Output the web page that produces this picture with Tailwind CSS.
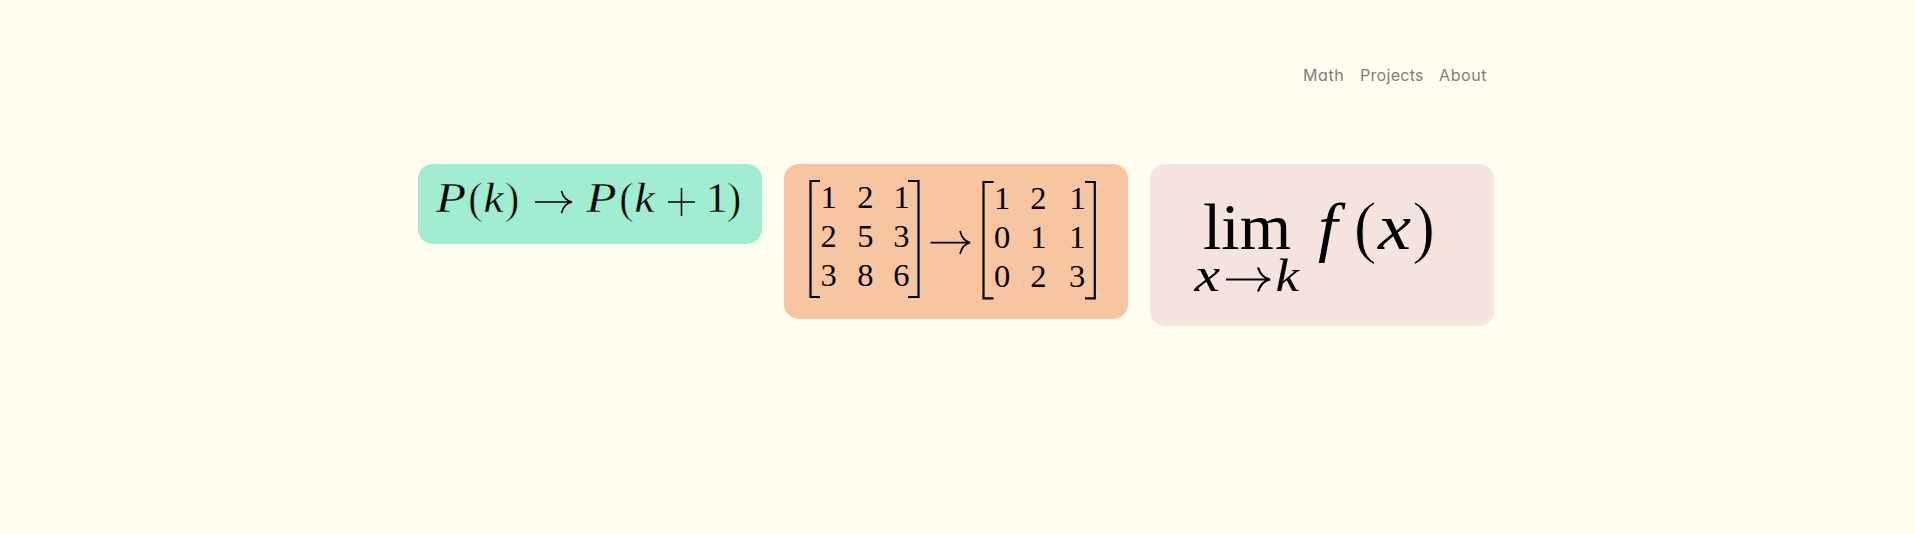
<!DOCTYPE html>
<html lang="en">
<head>
<meta charset="utf-8">
<title>Math</title>
<script src="https://cdn.jsdelivr.net/npm/@tailwindcss/browser@4"></script>
</head>
<body class="bg-[#fffdf0] min-h-screen overflow-hidden">
<div class="w-[1076px] ml-[418px] pt-[61px]">
  <nav class="flex justify-end gap-4 pr-[6px] h-[103px] text-base leading-7 text-[#808078] font-[Inter,sans-serif] [font-feature-settings:'cv11'] tracking-[0.3px]">
    <a class="w-[41px] whitespace-nowrap tracking-[0.6px]">Math</a>
    <a class="w-[63px] whitespace-nowrap">Projects</a>
    <a class="w-[49px] whitespace-nowrap tracking-[0.6px]">About</a>
  </nav>
  <main class="flex items-start gap-[22px] font-['Liberation_Serif',serif]">
    <section class="w-[344px] h-[80px] rounded-[15px] bg-[#a0edd1]">
      <svg class="block w-full h-full" viewBox="418 164 344 80" font-size="43">
        <g font-style="italic" stroke="#a0edd1" stroke-width=".3">
          <text x="436" y="212.3" textLength="30" lengthAdjust="spacingAndGlyphs">P</text>
          <text x="483.500" y="212.3" textLength="20" lengthAdjust="spacingAndGlyphs">k</text>
          <text x="586.500" y="212.3" textLength="30" lengthAdjust="spacingAndGlyphs">P</text>
          <text x="634.500" y="212.3" textLength="20" lengthAdjust="spacingAndGlyphs">k</text>
        </g>
        <g font-size="45" stroke="#a0edd1" stroke-width=".8">
          <text x="468" y="212.500">(</text><text x="504.500" y="212.500">)</text>
          <text x="619" y="212.500">(</text><text x="726.500" y="212.500">)</text>
        </g>
        <text x="706" y="212.3" stroke="#a0edd1" stroke-width=".3">1</text>
        <path d="M535 202H571M668 202H695M681.500 188V216M561.500 191C563 197 567 201 572 202C567 203 563 207 561.500 213" fill="none" stroke="#000" stroke-width="1.6"/>
      </svg>
    </section>
    <section class="w-[344px] h-[155px] rounded-[15px] bg-[#f7c5a0]">
      <svg class="block w-full h-full" viewBox="784 164 344 155" font-size="32.5" text-anchor="middle">
        <text y="207.7" x="828.5 865.3 901.5">121</text>
        <text y="247" x="828.5 865.3 901.3">253</text>
        <text y="286.200" x="828.5 865.3 901.3">386</text>
        <text y="208.700" x="1002 1038.3 1077.5">121</text>
        <text y="248" x="1002 1038.3 1077">011</text>
        <text y="287.300" x="1002 1038.3 1077">023</text>
        <g fill="none" stroke="#000" stroke-width="2.2">
          <path d="M820 181H810.500V297H820M908 181H918.500V297H908M993.500 182H983.500V298.300H993.500M1085 182H1094.800V298.300H1085"/>
          <path d="M930.500 242.600H969" stroke-width="1.700"/>
          <path d="M960 231C961.500 237 965 241.500 970 242.600C965 243.700 961.500 248 960 254" stroke-width="1.700"/>
        </g>
      </svg>
    </section>
    <section class="w-[344px] h-[162px] rounded-[15px] bg-[#f5e3e0]">
      <svg class="block w-full h-full" viewBox="1150 164 344 162" font-size="65">
        <text x="1203" y="248.700" textLength="88" lengthAdjust="spacingAndGlyphs">lim</text>
        <g font-style="italic">
          <text transform="translate(1318 248.700) scale(1.080 1)" font-size="65">f</text>
          <text transform="translate(1378 248.700) scale(1.130 1)" font-size="66">x</text>
          <text transform="translate(1194.500 291) scale(1.200 1)" font-size="48">x</text>
          <text transform="translate(1275.500 291) scale(1.150 1)" font-size="46">k</text>
        </g>
        <g font-size="70" stroke="#f5e3e0" stroke-width="1">
          <text x="1353.500" y="249.500">(</text>
          <text x="1412" y="249.500">)</text>
        </g>
        <path d="M1226 279.500H1269M1258 267.500C1260 273.500 1264 278.300 1270 279.500C1264 280.700 1260 285.500 1258 291.500" fill="none" stroke="#000" stroke-width="2.2"/>
      </svg>
    </section>
  </main>
</div>
</body>
</html>
